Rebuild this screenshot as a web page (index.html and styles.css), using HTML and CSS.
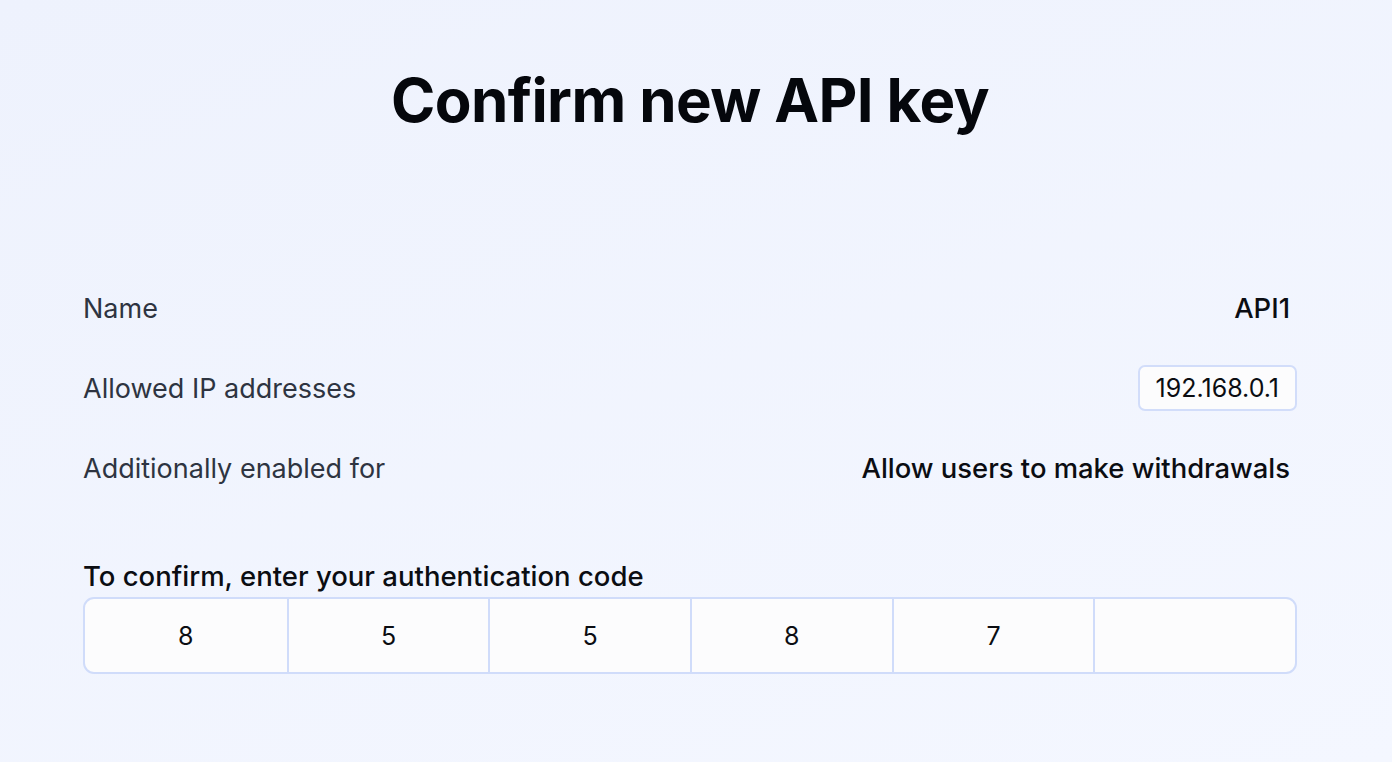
FILE: index.html
```html
<!DOCTYPE html>
<html lang="en">
<head>
    <meta charset="UTF-8">
    <meta name="viewport" content="width=device-width, initial-scale=1.0">
    <title>Confirm new API key</title>
    <link rel="stylesheet" href="styles.css">
</head>
<body>
    <div class="page">
        <h1>Confirm new API key</h1>

        <div class="details">
            <div class="row">
                <span class="label">Name</span>
                <span class="value">API1</span>
            </div>
            <div class="row">
                <span class="label">Allowed IP addresses</span>
                <span class="ip">192.168.0.1</span>
            </div>
            <div class="row">
                <span class="label">Additionally enabled for</span>
                <span class="value">Allow users to make withdrawals</span>
            </div>
        </div>

        <div class="confirm">
            <div class="confirm-label">To confirm, enter your authentication code</div>
            <div class="code">
                <div class="digit">8</div>
                <div class="digit">5</div>
                <div class="digit">5</div>
                <div class="digit">8</div>
                <div class="digit">7</div>
                <div class="digit"></div>
            </div>
        </div>
    </div>
</body>
</html>
```

FILE: styles.css
```css
html, body {
    height: 100%;
}
body {
    margin: 0;
    font-family: 'Inter', 'Noto Sans', sans-serif;
    background: linear-gradient(160deg, #eef2fd 0%, #f4f7ff 100%);
    color: #0b0d12;
}
.page {
    padding: 0 95px 0 83px;
}
h1 {
    margin: 0;
    padding-top: 68px;
    text-align: center;
    font-size: 60px;
    font-weight: 700;
    letter-spacing: -0.6px;
    line-height: 64px;
    color: #05070c;
}
.details {
    margin-top: 156px;
}
.row {
    display: flex;
    justify-content: space-between;
    align-items: center;
    height: 40px;
    margin-bottom: 40px;
}
.row:last-child {
    margin-bottom: 0;
}
.label {
    font-size: 27px;
    color: #2e3441;
}
.value {
    font-size: 27.4px;
    font-weight: 500;
    padding-right: 7px;
}
.ip {
    font-size: 25px;
    line-height: 42px;
    padding: 0 16px;
    border: 2px solid #d2ddfa;
    border-radius: 7px;
    background: #fcfcfd;
}
.confirm {
    margin-top: 71px;
}
.confirm-label {
    font-size: 27.5px;
    font-weight: 500;
    margin-bottom: 4px;
}
.code {
    display: grid;
    grid-template-columns: repeat(6, 1fr);
    border: 2px solid #d0dcfa;
    border-radius: 11px;
    background: #fcfcfd;
    overflow: hidden;
}
.digit {
    height: 73px;
    display: flex;
    align-items: center;
    justify-content: center;
    font-size: 25px;
    border-left: 2px solid #d0dcfa;
}
.digit:first-child {
    border-left: none;
}
```
